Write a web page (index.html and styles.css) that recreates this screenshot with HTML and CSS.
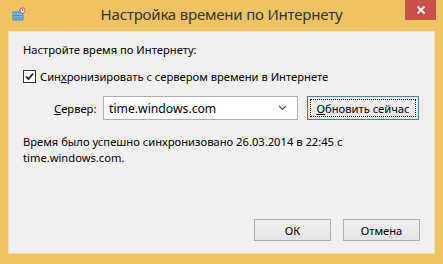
FILE: index.html
```html
<!DOCTYPE html>
<html lang="ru">
<head>
<meta charset="utf-8">
<link rel="stylesheet" href="styles.css">
</head>
<body>
<div class="window">
  <div class="titlebar">
    <div class="tb-left">
      <svg class="app-icon" width="14" height="14" viewBox="0 0 14 14">
        <rect x="1" y="5" width="10" height="8" fill="#7fc2e8" stroke="#3a8ccc" stroke-width="1"/>
        <path d="M1.5 8.5h9M1.5 11h9M4 5.5v7M7 5.5v7" stroke="#3a8ccc" stroke-width="0.8"/>
        <circle cx="10.5" cy="3.5" r="2.6" fill="#fff" stroke="#c04060" stroke-width="0.9"/>
        <path d="M10.5 2v1.6h1.2" stroke="#c04060" stroke-width="0.8" fill="none"/>
      </svg>
    </div>
    <div class="title">Настройка времени по Интернету</div>
    <div class="tb-right">
      <div class="close">
        <svg width="10" height="10" viewBox="0 0 10 10"><path d="M1.5 1.5l7 7M8.5 1.5l-7 7" stroke="#fff" stroke-width="1.8"/></svg>
      </div>
    </div>
  </div>
  <div class="client">
    <div class="heading">Настройте время по Интернету:</div>
    <div class="check-row">
      <span class="checkbox">
        <svg width="11" height="11" viewBox="0 0 11 11"><path d="M2 5.5l2.5 2.6L9 2.5" stroke="#222" stroke-width="1.8" fill="none"/></svg>
      </span>
      <span>Син<u>х</u>ронизировать с сервером времени в Интернете</span>
    </div>
    <div class="server-row">
      <span class="server-label"><u>С</u>ервер:</span>
      <div class="combo">
        <span>time.windows.com</span>
        <svg width="9" height="6" viewBox="0 0 9 6"><path d="M1 1l3.5 3.5L8 1" stroke="#555" stroke-width="1.2" fill="none"/></svg>
      </div>
      <div class="btn btn-focus"><span class="focus-rect"><u>О</u>бновить сейчас</span></div>
    </div>
    <div class="status">Время было успешно синхронизовано 26.03.2014 в 22:45 с<br>time.windows.com.</div>
    <div class="buttons">
      <div class="btn btn-ok">ОК</div>
      <div class="btn btn-cancel">Отмена</div>
    </div>
  </div>
</div>
</body>
</html>
```
FILE: styles.css
```css
* { box-sizing: border-box; }
html, body { margin: 0; padding: 0; }
body {
  width: 443px;
  height: 264px;
  overflow: hidden;
  font-family: "Noto Sans", "Open Sans", sans-serif;
  font-size: 11.2px;
  color: #000;
}
.window {
  width: 443px;
  height: 264px;
  background: #edc363;
  display: flex;
  flex-direction: column;
}
.titlebar {
  height: 31px;
  display: grid;
  grid-template-columns: 1fr auto 1fr;
  align-items: start;
}
.tb-left { padding: 7px 0 0 12px; }
.app-icon { display: block; }
.title {
  font-size: 15px;
  color: #333;
  padding-top: 4px;
  letter-spacing: -0.2px;
}
.tb-right { display: flex; justify-content: flex-end; padding-right: 7px; }
.close {
  width: 31px;
  height: 20px;
  background: #c7504b;
  display: flex;
  align-items: center;
  justify-content: center;
}
.client {
  margin: 0 8px;
  height: 223px;
  background: #f0f0f0;
  border: 1px solid #f7e2b0;
  border-bottom-color: #f5dca0;
  padding: 9px 0 0 14px;
  display: flex;
  flex-direction: column;
}
.heading { height: 17px; line-height: 17px; }
.check-row {
  margin-top: 10px;
  display: flex;
  align-items: center;
  gap: 4px;
  height: 16px;
}
.checkbox {
  width: 13px;
  height: 13px;
  border: 1px solid #333;
  background: #fff;
  display: flex;
  align-items: center;
  justify-content: center;
}
.server-row {
  margin-top: 12px;
  display: flex;
  align-items: center;
  height: 24px;
}
.server-label { margin-left: 31px; width: 49px; }
.combo {
  width: 195px;
  height: 24px;
  background: #fff;
  border: 1px solid #acacac;
  display: flex;
  align-items: center;
  justify-content: space-between;
  padding: 0 10px 0 5px;
  font-size: 12.2px;
}
.btn {
  height: 22px;
  border: 1px solid #acacac;
  background: linear-gradient(#f0f0f0, #e5e5e5);
  display: flex;
  align-items: center;
  justify-content: center;
}
.btn-focus {
  margin-left: 9px;
  width: 112px;
  height: 24px;
  border-color: #3c7fb1;
  padding: 2px;
}
.focus-rect {
  flex: 1;
  height: 100%;
  border: 1px dotted #000;
  display: flex;
  align-items: center;
  justify-content: center;
}
.status {
  margin-top: 14px;
  line-height: 16px;
}
.buttons {
  margin-top: auto;
  margin-bottom: 12px;
  display: flex;
  justify-content: flex-end;
  gap: 12px;
  padding-right: 14px;
}
.btn-ok, .btn-cancel { width: 77px; height: 22px; }
```
